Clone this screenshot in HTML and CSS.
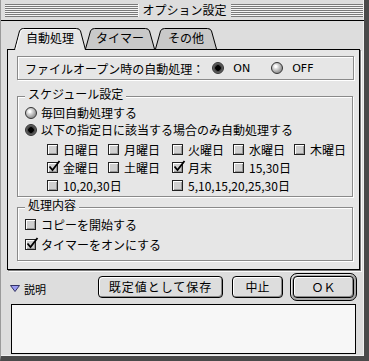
FILE: index.html
```html
<!DOCTYPE html>
<html lang="ja">
<head>
  <meta charset="UTF-8" />
  <title>オプション設定</title>
  <link rel="stylesheet" href="styles.css">
</head>
<body>
  <div class="window">
    <div class="titlebar">
      <div class="stripes"></div>
      <div class="title">オプション設定</div>
      <div class="stripes"></div>
    </div>

    <div class="content">
      <div class="tabs">
        <div class="tab tab-auto active">
          <svg width="72" height="22" viewBox="0 0 72 22">
            <path class="shape" d="M0.5,22 L5.5,3 Q6.5,0.5 9.5,0.5 L62.5,0.5 Q65.5,0.5 66.5,3 L71.5,22"/>
            <path class="shine" d="M2,21 L6.8,3.4 Q7.6,1.5 9.5,1.5 L62,1.5"/>
          </svg>
          <span>自動処理</span>
        </div>
        <div class="tab tab-timer">
          <svg width="70" height="22" viewBox="0 0 70 22">
            <path class="shape" d="M0.5,21 L5.5,3 Q6.5,0.5 9.5,0.5 L60.5,0.5 Q63.5,0.5 64.5,3 L69.5,21"/>
          </svg>
          <span>タイマー</span>
        </div>
        <div class="tab tab-other">
          <svg width="62" height="22" viewBox="0 0 62 22">
            <path class="shape" d="M0.5,21 L5.5,3 Q6.5,0.5 9.5,0.5 L52.5,0.5 Q55.5,0.5 56.5,3 L61.5,21"/>
          </svg>
          <span>その他</span>
        </div>
      </div>

      <div class="panel">
        <div class="openbox">
          <span class="open-label">ファイルオープン時の自動処理：</span>
          <span class="radio on"></span><span class="opt-on">ON</span>
          <span class="radio"></span><span class="opt-off">OFF</span>
        </div>

        <fieldset class="group schedule">
          <legend>スケジュール設定</legend>
          <div class="row"><span class="radio"></span>毎回自動処理する</div>
          <div class="row"><span class="radio on"></span>以下の指定日に該当する場合のみ自動処理する</div>
          <div class="days">
            <div class="day"><span class="check"></span>日曜日</div>
            <div class="day"><span class="check"></span>月曜日</div>
            <div class="day"><span class="check"></span>火曜日</div>
            <div class="day"><span class="check"></span>水曜日</div>
            <div class="day"><span class="check"></span>木曜日</div>
            <div class="day"><span class="check checked"><svg width="14" height="14" viewBox="0 0 14 14"><path d="M2.5,6.5 L5.5,10 L12.5,1"/></svg></span>金曜日</div>
            <div class="day"><span class="check"></span>土曜日</div>
            <div class="day"><span class="check checked"><svg width="14" height="14" viewBox="0 0 14 14"><path d="M2.5,6.5 L5.5,10 L12.5,1"/></svg></span>月末</div>
            <div class="day"><span class="check"></span>15,30日</div>
            <div class="day"></div>
            <div class="day span2"><span class="check"></span>10,20,30日</div>
            <div class="day span3"><span class="check"></span>5,10,15,20,25,30日</div>
          </div>
        </fieldset>

        <fieldset class="group actions">
          <legend>処理内容</legend>
          <div class="row"><span class="check"></span>コピーを開始する</div>
          <div class="row"><span class="check checked"><svg width="14" height="14" viewBox="0 0 14 14"><path d="M2.5,6.5 L5.5,10 L12.5,1"/></svg></span>タイマーをオンにする</div>
        </fieldset>
      </div>

      <div class="footer">
        <div class="disclosure">
          <svg width="10" height="7" viewBox="0 0 10 7"><path d="M0.5,0.5 L9.5,0.5 L5,6.5 Z"/></svg>
          <span>説明</span>
        </div>
        <button type="button" class="btn btn-save">既定値として保存</button>
        <button type="button" class="btn btn-cancel">中止</button>
        <div class="default-ring"><button type="button" class="btn btn-ok">ＯＫ</button></div>
      </div>

      <div class="notes"></div>
    </div>
  </div>
</body>
</html>
```

FILE: styles.css
```css
body { margin: 0; background: #dddddd; font-family: "Noto Sans CJK JP", "DejaVu Sans", sans-serif; font-size: 12px; color: #000; }
.window {
  width: 369px;
  height: 361px;
  box-sizing: border-box;
  background: #dddddd;
  border-left: 1px solid #9a9a9a;
  border-right: 5px solid #4a4a4a;
  border-bottom: 5px solid #4a4a4a;
  box-shadow: inset -1px -1px 0 #f0f0f0;
}

/* title bar */
.titlebar {
  height: 20px;
  display: flex;
  align-items: center;
  gap: 3px;
  padding: 0 0 0 4px;
  border-bottom: 1px solid #000;
  box-sizing: content-box;
}
.stripes {
  flex: 1;
  height: 13px;
  background: repeating-linear-gradient(to bottom, #7a7a7a 0 1px, #f4f4f4 1px 2px);
  border-right: 1px solid #f4f4f4;
}
.title { line-height: 20px; padding: 0 1px; }

.content { padding: 7px 0 0 6px; }

/* tabs */
.tabs { display: flex; padding-left: 7px; height: 22px; margin-bottom: -1px; position: relative; z-index: 1; }
.tab { display: grid; height: 22px; }
.tab > * { grid-area: 1 / 1; }
.tab span { justify-self: center; align-self: center; line-height: 14px; padding-bottom: 2px; }
.tab .shape { fill: #c9c9c9; stroke: #000; stroke-width: 1; }
.tab.active .shape { fill: #e6e6e6; }
.tab .shine { fill: none; stroke: #fbfbfb; stroke-width: 1; }
.tab-auto { width: 72px; }
.tab-timer { width: 70px; margin-left: -1px; }
.tab-other { width: 62px; margin-left: 0; }

/* panel */
.panel {
  width: 353px;
  box-sizing: border-box;
  background: #e6e6e6;
  border: 1px solid #000;
  box-shadow: 1px 1px 0 #7a7a7a, 2px 2px 0 #fafafa;
  padding: 6px 5px 8px 9px;
}
.openbox {
  height: 24px;
  box-sizing: border-box;
  display: flex;
  align-items: center;
  padding-left: 7px;
  border: 1px solid #8a8a8a;
  box-shadow: 1px 1px 0 #fff, inset 1px 1px 0 #fff;
}
.open-label { margin-right: 8px; }
.opt-on { margin-left: 5px; margin-right: 21px; font-family: "DejaVu Sans", sans-serif; font-size: 11px; }
.opt-off { margin-left: 5px; font-family: "DejaVu Sans", sans-serif; font-size: 11px; }

.group {
  margin: 8px 1px 0 0;
  padding: 0 0 2px 7px;
  min-width: 0;
  border: 1px solid #8a8a8a;
  box-shadow: 1px 1px 0 #fff, inset 1px 1px 0 #fff;
}
.group legend {
  padding: 0 3px 4px;
  line-height: 12px;
  background: linear-gradient(to bottom, #e6e6e6 0 10px, transparent 10px);
}
.group.actions { margin-top: 2px; padding-bottom: 5px; }
.row { display: flex; align-items: center; height: 17px; }
.actions .row { height: 18px; margin-bottom: 2px; }

.radio {
  width: 12px;
  height: 12px;
  box-sizing: border-box;
  border-radius: 50%;
  border: 1px solid #333;
  background: radial-gradient(circle at 38% 35%, #ffffff 0 1px, #e4e4e4 2px, #9a9a9a 6px);
  margin-right: 4px;
  flex: none;
}
.radio.on { background: radial-gradient(circle at 50% 50%, #000 0 2.5px, #3a3a3a 3px, #6a6a6a 5px); }

.check {
  width: 11px;
  height: 11px;
  box-sizing: border-box;
  border: 1px solid #222;
  background: #cfcfcf;
  box-shadow: inset 1px 1px 0 #fff, inset -1px -1px 0 #9a9a9a;
  margin-right: 5px;
  flex: none;
  display: grid;
  overflow: visible;
}
.check svg { margin: -3px 0 0 -1px; overflow: visible; }
.check svg path { fill: none; stroke: #000; stroke-width: 1.8; }

.days {
  display: grid;
  grid-template-columns: 61px 64px 61px 61px auto;
  grid-auto-rows: 18px;
  margin: 2px 0 0 22px;
}
.day { display: flex; align-items: center; }
.span2 { grid-column: span 2; }
.span3 { grid-column: span 3; }

/* footer */
.footer { display: flex; align-items: center; height: 32px; padding-top: 1px; }
.disclosure { display: flex; align-items: center; gap: 4px; margin-left: 3px; width: 88px; font-size: 11px; padding-top: 3px; }
.disclosure path { fill: #9a9af0; stroke: #333366; stroke-width: 1; }
.btn {
  font-family: "Noto Sans CJK JP", sans-serif;
  font-size: 12px;
  height: 22px;
  line-height: 18px;
  padding: 0;
  border: 1px solid #000;
  border-radius: 4px;
  background: #dddddd;
  box-shadow: inset 1px 1px 0 #fff, inset -1px -1px 0 #8a8a8a;
  color: #000;
}
.btn-save { width: 125px; letter-spacing: 1px; }
.btn-cancel { width: 51px; margin-left: 9px; }
.default-ring {
  margin-left: 7px;
  padding: 2px;
  border: 1px solid #000;
  border-radius: 7px;
  background: #a8a8a8;
  box-shadow: inset 1px 1px 0 #e8e8e8;
  display: flex;
}
.btn-ok { width: 61px; }

.notes {
  width: 345px;
  height: 50px;
  box-sizing: border-box;
  margin: 1px 0 0 4px;
  background: #f7f7f7;
  border: 1px solid #000;
}
```
